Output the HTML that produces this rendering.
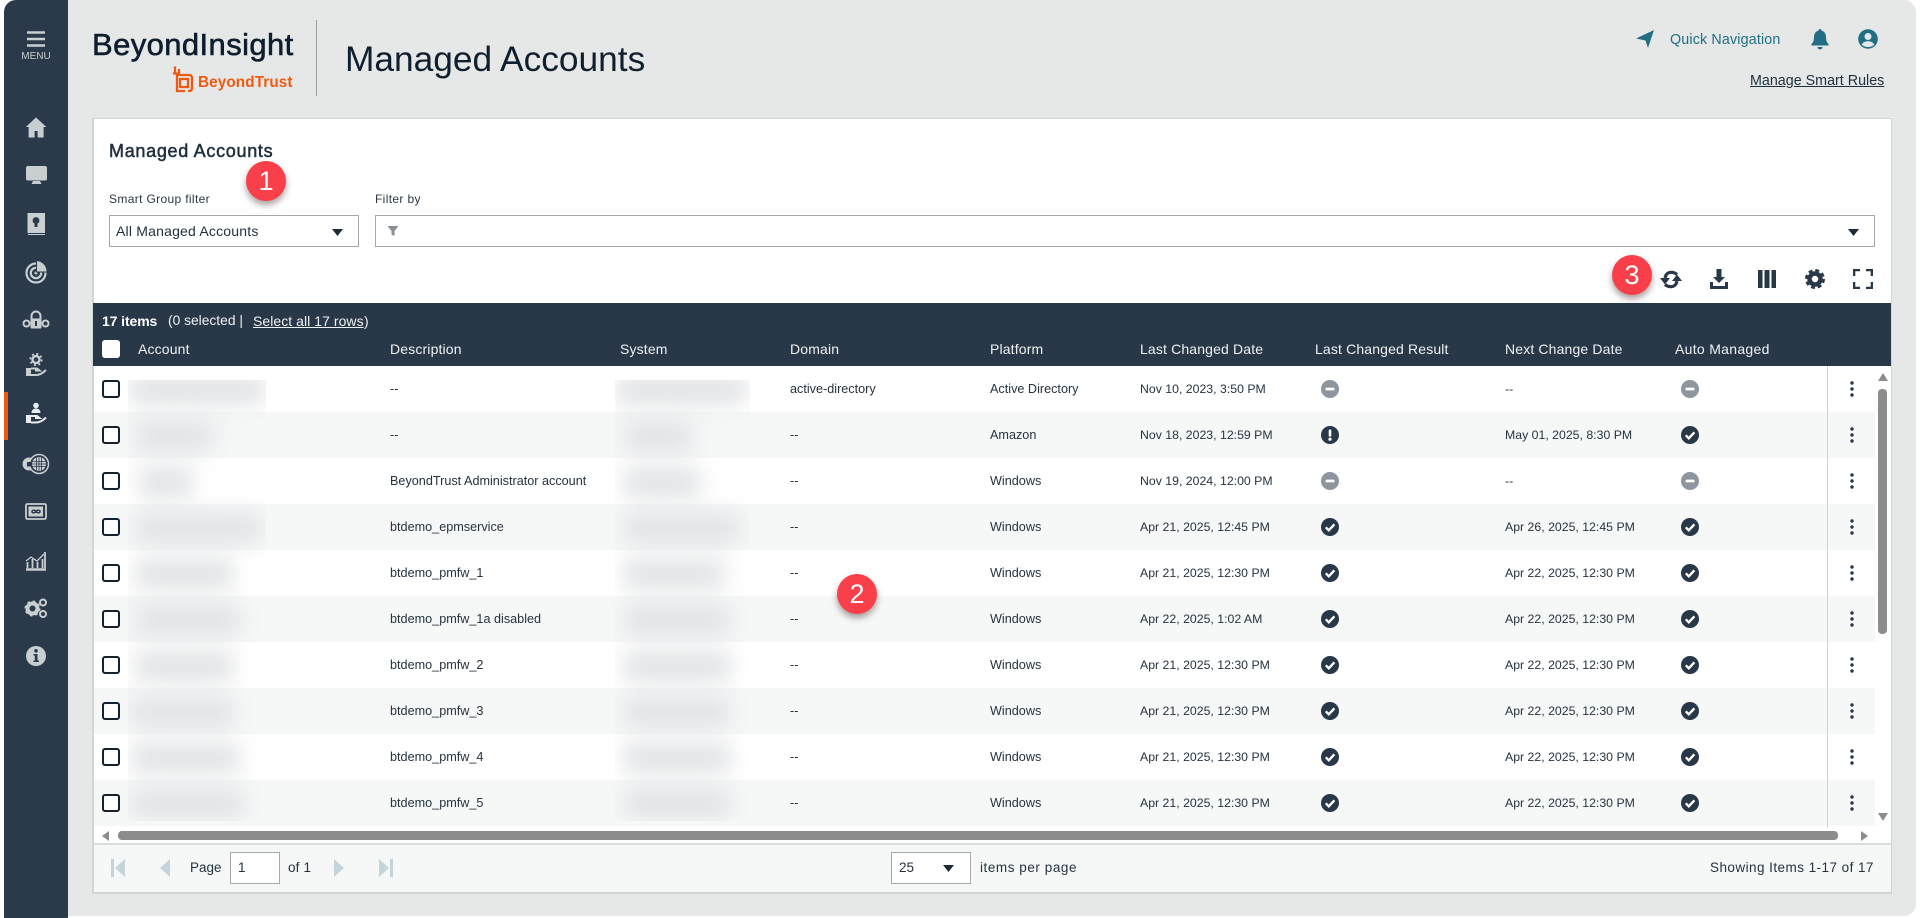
<!DOCTYPE html>
<html lang="en">
<head>
<meta charset="utf-8">
<title>Managed Accounts</title>
<style>
html,body{margin:0;padding:0;background:#fff;width:1920px;height:918px;overflow:hidden;font-family:"Liberation Sans",sans-serif;color:#1f2f3e}
*{box-sizing:border-box}
.a{position:absolute;white-space:nowrap}
#bg{position:absolute;left:4px;top:0;width:1912px;height:916px;background:#e6e8e8;border-radius:12px 12px 12px 0}
#side{position:absolute;left:4px;top:0;width:64px;height:918px;background:#2b3a4a;border-radius:12px 0 0 0}
#card{position:absolute;left:92px;top:118px;width:1800px;height:776px;background:#fff;border:2px solid #d2d5d5;border-top-width:1px;border-right-width:1px}
#hdr{position:absolute;left:93px;top:303px;width:1798px;height:63px;background:#283848;color:#fff}
.row{position:absolute;left:94px;width:1781px;height:46px;font-size:12.65px;line-height:47px;color:#25333f}
.row.o{background:#fff}.row.e{background:#f6f8f8}
.row span{position:absolute;white-space:nowrap;top:0}
.d{left:296px}.m{left:696px}.p{left:896px}
.l{left:1046px;font-size:12.3px}.n{left:1411px;font-size:12.3px}
.cb{position:absolute;left:8px;top:14px;width:18px;height:18px;border:2px solid #14222f;border-radius:3px;background:#fff}
.row svg{position:absolute}
.s1{left:1227px;top:14px}.s2{left:1587px;top:14px}.k{left:1749px;top:14px}
.th{position:absolute;top:37px;font-size:14px;line-height:18px;color:#eef1f3;white-space:nowrap;letter-spacing:.15px}
.sel{position:absolute;background:#fff;border:1px solid #a4a8ac}
.ic{position:absolute}
.badge{position:absolute;width:40px;height:40px;border-radius:50%;background:#f9404a;color:#fff;font-size:27px;line-height:40px;text-align:center;box-shadow:0 4px 7px rgba(70,40,40,.45)}
.nav{position:absolute;left:22px}
.sm{position:absolute;overflow:hidden}
.sm i{position:absolute;display:block;height:30px;background:#e1e3e5;filter:blur(11px);border-radius:10px}
</style>
</head>
<body>
<svg width="0" height="0" style="position:absolute">
<defs>
<symbol id="ck" viewBox="0 0 18 18"><circle cx="9" cy="9" r="9" fill="#283848"/><path d="M4.800 9.300l3 3 5.600-6" fill="none" stroke="#fff" stroke-width="2.400"/></symbol>
<symbol id="mi" viewBox="0 0 18 18"><circle cx="9" cy="9" r="9" fill="#8d959f"/><rect x="4.500" y="7.600" width="9" height="2.800" rx="1" fill="#fff"/></symbol>
<symbol id="ex" viewBox="0 0 18 18"><circle cx="9" cy="9" r="9" fill="#283848"/><rect x="7.700" y="3.500" width="2.600" height="7.200" rx="1" fill="#fff"/><circle cx="9" cy="13.200" r="1.600" fill="#fff"/></symbol>
<symbol id="ke" viewBox="0 0 18 18"><circle cx="9" cy="3" r="1.700" fill="#283848"/><circle cx="9" cy="9" r="1.700" fill="#283848"/><circle cx="9" cy="15" r="1.700" fill="#283848"/></symbol>
</defs>
</svg>

<div id="bg"></div>
<div id="side"></div>

<!-- sidebar -->
<svg class="a" style="left:26px;top:30px" width="20" height="18" viewBox="0 0 20 18"><path d="M1 2.500h18M1 9h18M1 15.500h18" stroke="#c9ced1" stroke-width="2.400"/></svg>
<div class="a" style="left:21px;top:51px;font-size:10px;line-height:12px;color:#c9ced1;width:30px;text-align:center">MENU</div>
<div class="a" style="left:4px;top:392px;width:4px;height:48px;background:#ec5a0f"></div>

<svg class="nav" style="top:116px" width="28" height="24" viewBox="0 0 28 24"><path d="M14 1.500L3.800 11h2.800v10.500h6V15h3v6.500h6V11h2.800L14 1.500z" fill="#c9ced1"/></svg>
<svg class="nav" style="top:164px" width="28" height="24" viewBox="0 0 28 24"><rect x="4" y="2" width="21" height="14.500" rx="2" fill="#c9ced1"/><path d="M11 17h7l1.500 3h-10z" fill="#c9ced1"/></svg>
<svg class="nav" style="top:212px" width="28" height="24" viewBox="0 0 28 24"><rect x="5.500" y="1" width="17.500" height="20" fill="#c9ced1"/><path d="M6 22.500h17" stroke="#c9ced1"/><circle cx="14" cy="8.500" r="3.400" fill="#2b3a4a"/><rect x="12.500" y="11.500" width="3" height="3.500" fill="#2b3a4a"/></svg>
<svg class="nav" style="top:260px" width="28" height="24" viewBox="0 0 28 24"><circle cx="14" cy="13" r="9.500" fill="none" stroke="#c9ced1" stroke-width="2.200"/><circle cx="14" cy="13" r="5.200" fill="none" stroke="#c9ced1" stroke-width="2.200"/><circle cx="14" cy="13" r="1.500" fill="#c9ced1"/><path d="M14.500 0.500a11 11 0 0 1 10.500 11.500h-10.500z" fill="#c9ced1" stroke="#2b3a4a"/></svg>
<svg class="nav" style="top:308px" width="28" height="24" viewBox="0 0 28 24"><path d="M9.500 11V8a4.500 4.500 0 0 1 9 0v3" fill="none" stroke="#c9ced1" stroke-width="2"/><rect x="8.500" y="10.500" width="11" height="10" rx="1" fill="#c9ced1"/><circle cx="4.500" cy="15.500" r="3" fill="none" stroke="#c9ced1" stroke-width="2"/><circle cx="23.500" cy="15.500" r="3" fill="none" stroke="#c9ced1" stroke-width="2"/><rect x="13" y="13" width="2" height="5" fill="#2b3a4a"/></svg>
<svg class="nav" style="top:352px" width="28" height="26" viewBox="0 0 28 26"><circle cx="14" cy="7.500" r="3.500" fill="none" stroke="#c9ced1" stroke-width="2.400"/><circle cx="14" cy="7.500" r="5.700" fill="none" stroke="#c9ced1" stroke-width="1.800" stroke-dasharray="2 2.500"/><rect x="4" y="16" width="5" height="8" fill="#c9ced1"/><path d="M9 16.500h6l2.500 2H13M9 23h5c4 0 7-2 10-5" fill="none" stroke="#c9ced1" stroke-width="2"/></svg>
<svg class="nav" style="top:402px" width="28" height="24" viewBox="0 0 28 24"><circle cx="14" cy="3.500" r="2.800" fill="#e9ecee"/><path d="M9.500 11c0-3 2-4.500 4.500-4.500s4.500 1.500 4.500 4.500z" fill="#e9ecee"/><rect x="4" y="13" width="5" height="8" fill="#e9ecee"/><path d="M9 14h6l2.500 2H13M9 20.500h5c4 0 7-2 10-5" fill="none" stroke="#e9ecee" stroke-width="2"/></svg>
<svg class="nav" style="top:452px" width="28" height="24" viewBox="0 0 28 24"><circle cx="7" cy="12" r="6.500" fill="#c9ced1"/><circle cx="17" cy="12" r="9.500" fill="#2b3a4a" stroke="#c9ced1" stroke-width="1.500"/><circle cx="17" cy="12" r="7" fill="#c9ced1"/><path d="M10 9.500h14M10 12h14M10 14.500h14M14.500 5v14M17 5v14M19.500 5v14" stroke="#2b3a4a" stroke-width=".8"/><rect x="5" y="10" width="3.500" height="4.500" fill="#2b3a4a"/></svg>
<svg class="nav" style="top:500px" width="28" height="24" viewBox="0 0 28 24"><rect x="4" y="4" width="20" height="15" rx="1.500" fill="none" stroke="#c9ced1" stroke-width="1.800"/><rect x="6.500" y="6.500" width="14.500" height="10" fill="#c9ced1"/><path d="M14 11.500c-1.500-2-4-1.500-4 0s2.500 2 4 0 4-1.500 4 0-2.500 2-4 0z" fill="none" stroke="#2b3a4a" stroke-width="1.500"/></svg>
<svg class="nav" style="top:548px" width="28" height="24" viewBox="0 0 28 24"><path d="M4 21.500h20" stroke="#c9ced1" stroke-width="2.500"/><path d="M5.500 20v-6M10.500 20v-9M15.500 20v-6M20.500 20v-9M23 20V4" stroke="#c9ced1" stroke-width="1.800"/><path d="M4 13l5-4 6 4 7-7" fill="none" stroke="#c9ced1" stroke-width="1.300"/></svg>
<svg class="nav" style="top:596px" width="28" height="24" viewBox="0 0 28 24"><circle cx="10.500" cy="12.500" r="5" fill="none" stroke="#c9ced1" stroke-width="4"/><circle cx="10.500" cy="12.500" r="7" fill="none" stroke="#c9ced1" stroke-width="2" stroke-dasharray="2.500 3"/><circle cx="21" cy="6.500" r="3" fill="none" stroke="#c9ced1" stroke-width="2"/><circle cx="21" cy="18" r="3" fill="none" stroke="#c9ced1" stroke-width="2"/></svg>
<svg class="nav" style="top:644px" width="28" height="24" viewBox="0 0 28 24"><circle cx="14" cy="12" r="10" fill="#c9ced1"/><circle cx="14" cy="6.800" r="1.800" fill="#2b3a4a"/><path d="M11.500 10h4v6.500h1.500V18h-5.500v-1.500h1.300V11.500h-1.300z" fill="#2b3a4a"/></svg>

<!-- logo -->
<div class="a" style="left:92px;top:24px;font-size:31px;line-height:42px;letter-spacing:.4px;color:#0e1e2e;-webkit-text-stroke:.6px #0e1e2e">BeyondInsight</div>
<svg class="a" style="left:171px;top:64px" width="23" height="30" viewBox="0 0 23 30"><path d="M4 9V2.500M8 11V5M2 9.500h4V27h8M6 11h12c2 0 3 1 3 3v10c0 2-1 3-3 3h-1M9 15h8v8H9z" fill="none" stroke="#ee5a12" stroke-width="2.300"/></svg>
<div class="a" style="left:198px;top:73px;font-size:15.300px;line-height:20px;font-weight:bold;color:#ee5a12;letter-spacing:.1px">BeyondTrust</div>
<div class="a" style="left:316px;top:20px;width:1px;height:76px;background:#9a9d9f"></div>
<div class="a" style="left:345px;top:38px;font-size:35.300px;line-height:44px;color:#101f2e">Managed Accounts</div>

<!-- top right -->
<svg class="ic" style="left:1635px;top:29px" width="20" height="20" viewBox="0 0 20 20"><path d="M1 9.500L19 1 13 19l-2.500-7.500z" fill="#216e85"/></svg>
<div class="a" style="left:1670px;top:31px;font-size:14.300px;line-height:18px;letter-spacing:.15px;color:#216e85">Quick Navigation</div>
<svg class="ic" style="left:1811px;top:28px" width="18" height="22" viewBox="0 0 18 22"><path d="M9 1c1 0 1.500.7 1.500 1.600C13.500 3.300 15 6 15 9c0 4 1 5.500 2.500 7v1.500H.5V16C2 14.500 3 13 3 9c0-3 1.500-5.700 4.500-6.400C7.500 1.700 8 1 9 1z" fill="#216e85"/><path d="M6.500 19h5a2.500 2.500 0 0 1-5 0z" fill="#216e85"/></svg>
<svg class="ic" style="left:1858px;top:29px" width="20" height="20" viewBox="0 0 20 20"><circle cx="10" cy="10" r="9.800" fill="#216e85"/><circle cx="10" cy="7.500" r="3.500" fill="#e6e8e8"/><path d="M3.800 15.800C5 13 7.500 12.300 10 12.300s5 .7 6.200 3.500A8.500 8.500 0 0 1 10 18a8.500 8.500 0 0 1-6.200-2.200z" fill="#e6e8e8"/></svg>
<div class="a" style="left:1750px;top:72px;font-size:14.300px;line-height:18px;color:#1f2f3e;text-decoration:underline">Manage Smart Rules</div>

<!-- card -->
<div id="card"></div>
<div class="a" style="left:109px;top:140px;font-size:18px;line-height:22px;letter-spacing:.7px;color:#1f2f3e;-webkit-text-stroke:.5px #1f2f3e">Managed Accounts</div>
<div class="a" style="left:109px;top:192px;font-size:12px;line-height:14px;letter-spacing:.35px;color:#2a3845">Smart Group filter</div>
<div class="a" style="left:375px;top:192px;font-size:12px;line-height:14px;letter-spacing:.35px;color:#2a3845">Filter by</div>
<div class="sel" style="left:109px;top:215px;width:250px;height:32px"></div>
<div class="a" style="left:116px;top:222px;font-size:14px;line-height:18px;letter-spacing:.2px;color:#1f2f3e">All Managed Accounts</div>
<svg class="ic" style="left:332px;top:229px" width="11" height="7" viewBox="0 0 11 7"><path d="M0 0h11L5.500 7z" fill="#1c2b3a"/></svg>
<div class="sel" style="left:375px;top:215px;width:1500px;height:32px"></div>
<svg class="ic" style="left:387px;top:225px" width="12" height="12" viewBox="0 0 12 12"><path d="M.5 1h11L7.500 6v5l-3-1.500V6z" fill="#8a8f94"/></svg>
<svg class="ic" style="left:1848px;top:229px" width="11" height="7" viewBox="0 0 11 7"><path d="M0 0h11L5.500 7z" fill="#1c2b3a"/></svg>

<!-- toolbar -->
<svg class="ic" style="left:1660px;top:270px" width="22" height="19" viewBox="0 0 22 19"><path d="M17 4.500C13.500 1.500 8.500 1.500 6 5L5 8" fill="none" stroke="#283848" stroke-width="3.200"/><path d="M0 8h10L5 14.500z" fill="#283848"/><path d="M5 14.500C8.500 17.500 13.500 17.500 16 14L17 11" fill="none" stroke="#283848" stroke-width="3.200"/><path d="M12 11h10L17 4.500z" fill="#283848"/></svg>
<svg class="ic" style="left:1709px;top:268px" width="20" height="22" viewBox="0 0 20 22"><path d="M7.500 1h5v8H16l-6 6-6-6h3.500z" fill="#283848"/><path d="M1 14v7h18v-7h-3v4H4v-4z" fill="#283848"/></svg>
<svg class="ic" style="left:1758px;top:270px" width="18" height="18" viewBox="0 0 18 18"><rect width="4.500" height="18" fill="#283848"/><rect x="6.500" width="5" height="18" fill="#283848"/><rect x="13.500" width="4.500" height="18" fill="#283848"/></svg>
<svg class="ic" style="left:1805px;top:269px" width="20" height="20" viewBox="0 0 20 20"><circle cx="10" cy="10" r="5.500" fill="none" stroke="#283848" stroke-width="4.500"/><circle cx="10" cy="10" r="8.400" fill="none" stroke="#283848" stroke-width="3.200" stroke-dasharray="3.800 2.800"/></svg>
<svg class="ic" style="left:1853px;top:269px" width="20" height="20" viewBox="0 0 20 20"><path d="M1 7V1h6M13 1h6v6M19 13v6h-6M7 19H1v-6" fill="none" stroke="#283848" stroke-width="2.600"/></svg>

<!-- header -->
<div id="hdr">
  <div class="a" style="left:9px;top:11px;font-size:14px;line-height:14px;font-weight:bold;color:#fff;letter-spacing:-.1px">17 items</div>
  <div class="a" style="left:75px;top:11px;font-size:13.800px;line-height:14px;color:#eef1f3">(0 selected |</div>
  <div class="a" style="left:160px;top:11px;font-size:14px;line-height:14px;color:#eef1f3;text-decoration:underline;letter-spacing:.05px">Select all 17 rows</div>
  <div class="a" style="left:271px;top:11px;font-size:14px;line-height:14px;color:#eef1f3">)</div>
  <div class="a" style="left:9px;top:37px;width:18px;height:18px;background:#fff;border-radius:3px"></div>
  <div class="th" style="left:45px">Account</div>
  <div class="th" style="left:297px">Description</div>
  <div class="th" style="left:527px">System</div>
  <div class="th" style="left:697px">Domain</div>
  <div class="th" style="left:897px">Platform</div>
  <div class="th" style="left:1047px">Last Changed Date</div>
  <div class="th" style="left:1222px">Last Changed Result</div>
  <div class="th" style="left:1412px">Next Change Date</div>
  <div class="th" style="left:1582px;letter-spacing:.3px">Auto Managed</div>
</div>

<!-- rows -->
<div class="row o" style="top:366px"><div class="cb"></div><span class="d">--</span><span class="m">active-directory</span><span class="p">Active Directory</span><span class="l">Nov 10, 2023, 3:50 PM</span><svg class="s1" width="18" height="18"><use href="#mi"/></svg><span class="n">--</span><svg class="s2" width="18" height="18"><use href="#mi"/></svg><svg class="k" width="18" height="18"><use href="#ke"/></svg></div>
<div class="row e" style="top:412px"><div class="cb"></div><span class="d">--</span><span class="m">--</span><span class="p">Amazon</span><span class="l">Nov 18, 2023, 12:59 PM</span><svg class="s1" width="18" height="18"><use href="#ex"/></svg><span class="n">May 01, 2025, 8:30 PM</span><svg class="s2" width="18" height="18"><use href="#ck"/></svg><svg class="k" width="18" height="18"><use href="#ke"/></svg></div>
<div class="row o" style="top:458px"><div class="cb"></div><span class="d">BeyondTrust Administrator account</span><span class="m">--</span><span class="p">Windows</span><span class="l">Nov 19, 2024, 12:00 PM</span><svg class="s1" width="18" height="18"><use href="#mi"/></svg><span class="n">--</span><svg class="s2" width="18" height="18"><use href="#mi"/></svg><svg class="k" width="18" height="18"><use href="#ke"/></svg></div>
<div class="row e" style="top:504px"><div class="cb"></div><span class="d">btdemo_epmservice</span><span class="m">--</span><span class="p">Windows</span><span class="l">Apr 21, 2025, 12:45 PM</span><svg class="s1" width="18" height="18"><use href="#ck"/></svg><span class="n">Apr 26, 2025, 12:45 PM</span><svg class="s2" width="18" height="18"><use href="#ck"/></svg><svg class="k" width="18" height="18"><use href="#ke"/></svg></div>
<div class="row o" style="top:550px"><div class="cb"></div><span class="d">btdemo_pmfw_1</span><span class="m">--</span><span class="p">Windows</span><span class="l">Apr 21, 2025, 12:30 PM</span><svg class="s1" width="18" height="18"><use href="#ck"/></svg><span class="n">Apr 22, 2025, 12:30 PM</span><svg class="s2" width="18" height="18"><use href="#ck"/></svg><svg class="k" width="18" height="18"><use href="#ke"/></svg></div>
<div class="row e" style="top:596px"><div class="cb"></div><span class="d">btdemo_pmfw_1a disabled</span><span class="m">--</span><span class="p">Windows</span><span class="l">Apr 22, 2025, 1:02 AM</span><svg class="s1" width="18" height="18"><use href="#ck"/></svg><span class="n">Apr 22, 2025, 12:30 PM</span><svg class="s2" width="18" height="18"><use href="#ck"/></svg><svg class="k" width="18" height="18"><use href="#ke"/></svg></div>
<div class="row o" style="top:642px"><div class="cb"></div><span class="d">btdemo_pmfw_2</span><span class="m">--</span><span class="p">Windows</span><span class="l">Apr 21, 2025, 12:30 PM</span><svg class="s1" width="18" height="18"><use href="#ck"/></svg><span class="n">Apr 22, 2025, 12:30 PM</span><svg class="s2" width="18" height="18"><use href="#ck"/></svg><svg class="k" width="18" height="18"><use href="#ke"/></svg></div>
<div class="row e" style="top:688px"><div class="cb"></div><span class="d">btdemo_pmfw_3</span><span class="m">--</span><span class="p">Windows</span><span class="l">Apr 21, 2025, 12:30 PM</span><svg class="s1" width="18" height="18"><use href="#ck"/></svg><span class="n">Apr 22, 2025, 12:30 PM</span><svg class="s2" width="18" height="18"><use href="#ck"/></svg><svg class="k" width="18" height="18"><use href="#ke"/></svg></div>
<div class="row o" style="top:734px"><div class="cb"></div><span class="d">btdemo_pmfw_4</span><span class="m">--</span><span class="p">Windows</span><span class="l">Apr 21, 2025, 12:30 PM</span><svg class="s1" width="18" height="18"><use href="#ck"/></svg><span class="n">Apr 22, 2025, 12:30 PM</span><svg class="s2" width="18" height="18"><use href="#ck"/></svg><svg class="k" width="18" height="18"><use href="#ke"/></svg></div>
<div class="row e" style="top:780px"><div class="cb"></div><span class="d">btdemo_pmfw_5</span><span class="m">--</span><span class="p">Windows</span><span class="l">Apr 21, 2025, 12:30 PM</span><svg class="s1" width="18" height="18"><use href="#ck"/></svg><span class="n">Apr 22, 2025, 12:30 PM</span><svg class="s2" width="18" height="18"><use href="#ck"/></svg><svg class="k" width="18" height="18"><use href="#ke"/></svg></div>

<!-- redacted (blurred) cells -->
<div class="sm" style="left:128px;top:380px;width:138px;height:441px">
  <i style="left:0;top:-5px;width:138px"></i><i style="left:6px;top:41px;width:80px"></i><i style="left:10px;top:87px;width:55px"></i><i style="left:6px;top:133px;width:128px"></i><i style="left:6px;top:179px;width:100px"></i><i style="left:6px;top:225px;width:108px"></i><i style="left:6px;top:271px;width:100px"></i><i style="left:2px;top:317px;width:105px"></i><i style="left:2px;top:363px;width:110px"></i><i style="left:2px;top:409px;width:115px"></i>
</div>
<div class="sm" style="left:615px;top:380px;width:135px;height:441px">
  <i style="left:0;top:-5px;width:132px"></i><i style="left:8px;top:41px;width:70px"></i><i style="left:8px;top:87px;width:78px"></i><i style="left:8px;top:133px;width:118px"></i><i style="left:8px;top:179px;width:102px"></i><i style="left:8px;top:225px;width:108px"></i><i style="left:8px;top:271px;width:108px"></i><i style="left:8px;top:317px;width:108px"></i><i style="left:8px;top:363px;width:108px"></i><i style="left:8px;top:409px;width:108px"></i>
</div>

<!-- divider + vertical scrollbar -->
<div class="a" style="left:1827px;top:366px;width:1px;height:462px;background:#cfd3d3"></div>
<svg class="ic" style="left:1878px;top:373px" width="10" height="8" viewBox="0 0 10 8"><path d="M5 0l5 8H0z" fill="#8c8c8c"/></svg>
<div class="a" style="left:1878px;top:389px;width:9px;height:245px;background:#8c8c8c;border-radius:4px"></div>
<svg class="ic" style="left:1878px;top:813px" width="10" height="8" viewBox="0 0 10 8"><path d="M5 8L10 0H0z" fill="#8c8c8c"/></svg>

<!-- horizontal scrollbar -->
<svg class="ic" style="left:102px;top:831px" width="8" height="10" viewBox="0 0 8 10"><path d="M0 5l7-5v10z" fill="#8c8c8c"/></svg>
<div class="a" style="left:118px;top:831px;width:1720px;height:9px;background:#8c8c8c;border-radius:4px"></div>
<svg class="ic" style="left:1860px;top:831px" width="8" height="10" viewBox="0 0 8 10"><path d="M8 5L1 0v10z" fill="#8c8c8c"/></svg>

<!-- footer -->
<div class="a" style="left:94px;top:843px;width:1797px;height:49px;background:#f6f8f8;border-top:2px solid #d9dcdc"></div>
<svg class="ic" style="left:110px;top:858px" width="16" height="20" viewBox="0 0 16 20"><rect x="1" y="1" width="3" height="18" fill="#c4d4da"/><path d="M15 1v18L5 10z" fill="#c4d4da"/></svg>
<svg class="ic" style="left:159px;top:858px" width="12" height="20" viewBox="0 0 12 20"><path d="M11 1v18L1 10z" fill="#c4d4da"/></svg>
<div class="a" style="left:190px;top:860px;font-size:13.500px;line-height:16px;color:#25333f">Page</div>
<div class="a" style="left:230px;top:852px;width:50px;height:32px;background:#fff;border:1px solid #a4a8ac;font-size:13.500px;line-height:30px;padding-left:7px;color:#25333f">1</div>
<div class="a" style="left:288px;top:860px;font-size:13.500px;line-height:16px;letter-spacing:.15px;color:#25333f">of 1</div>
<svg class="ic" style="left:333px;top:858px" width="12" height="20" viewBox="0 0 12 20"><path d="M1 1v18l10-9z" fill="#c4d4da"/></svg>
<svg class="ic" style="left:378px;top:858px" width="16" height="20" viewBox="0 0 16 20"><path d="M1 1v18l10-9z" fill="#c4d4da"/><rect x="12" y="1" width="3" height="18" fill="#c4d4da"/></svg>
<div class="a" style="left:891px;top:852px;width:80px;height:32px;background:#fff;border:1px solid #a4a8ac;font-size:13.500px;line-height:29px;padding-left:7px;color:#25333f">25</div>
<svg class="ic" style="left:943px;top:865px" width="11" height="7" viewBox="0 0 11 7"><path d="M0 0h11L5.500 7z" fill="#1c2b3a"/></svg>
<div class="a" style="left:980px;top:860px;font-size:13.500px;line-height:16px;letter-spacing:.55px;color:#25333f">items per page</div>
<div class="a" style="left:1710px;top:860px;font-size:13.500px;line-height:16px;letter-spacing:.45px;color:#25333f">Showing Items 1-17 of 17</div>

<!-- callouts -->
<div class="badge" style="left:246px;top:161px">1</div>
<div class="badge" style="left:837px;top:574px">2</div>
<div class="badge" style="left:1612px;top:255px">3</div>
</body>
</html>
